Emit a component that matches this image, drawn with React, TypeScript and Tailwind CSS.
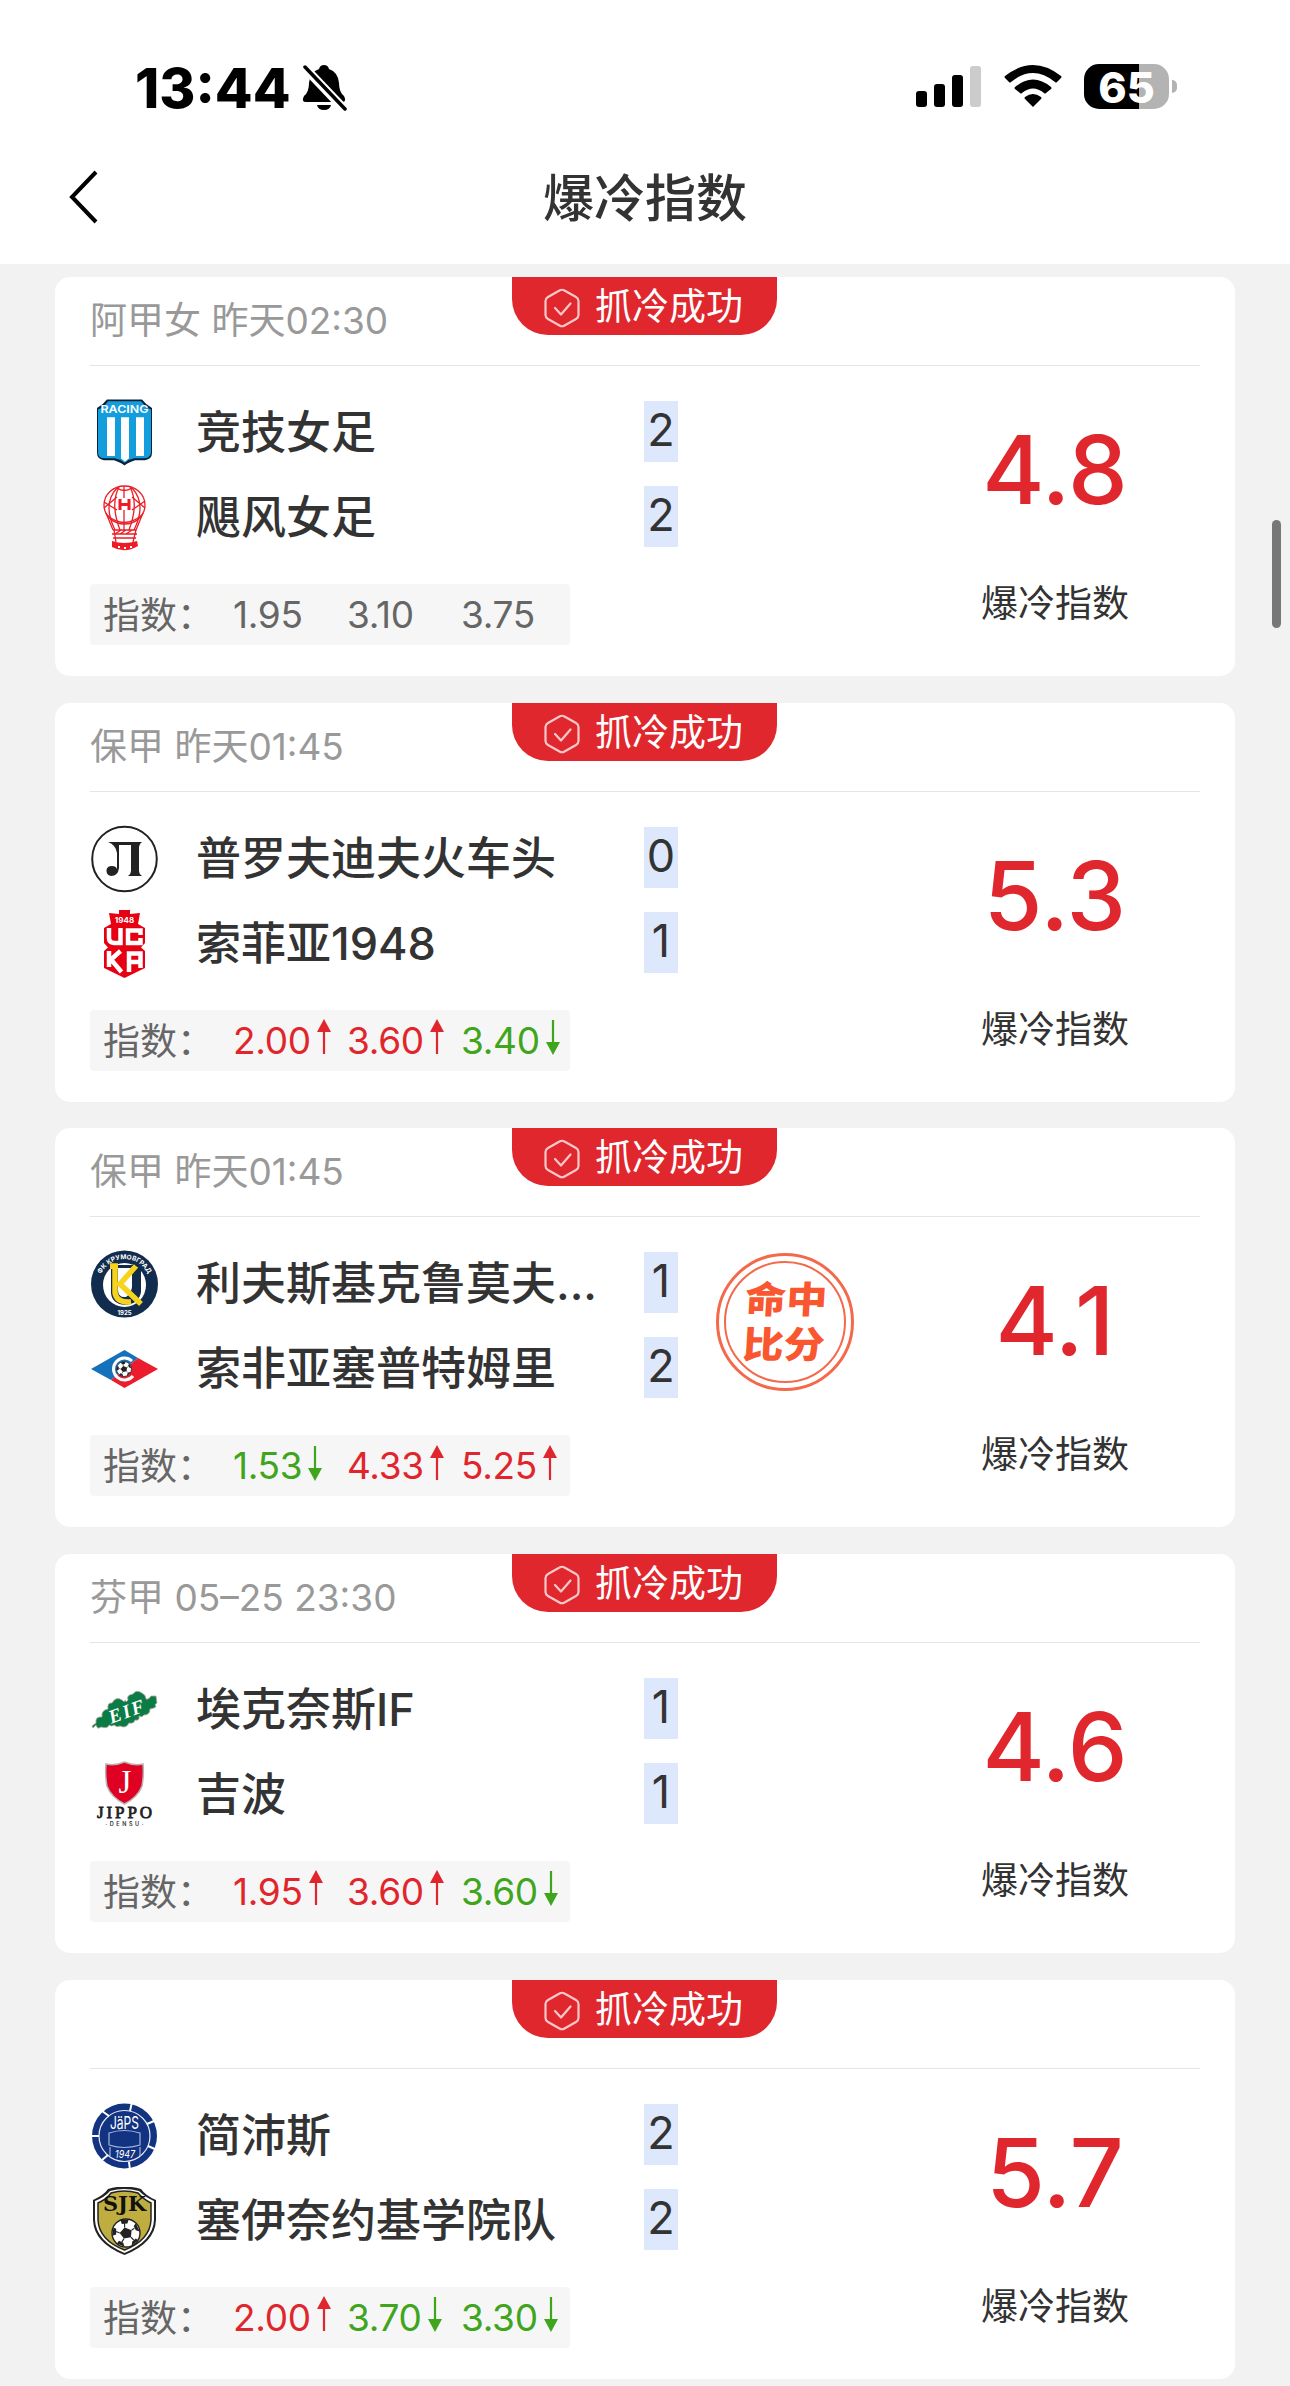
import type { ReactNode } from "react";

type Trend = "up" | "down" | "none";

interface Team {
 name: string;
 score: number;
 logo: ReactNode;
}

interface Odd {
 value: string;
 trend: Trend;
}

interface Match {
 id: number;
 title: string;
 home: Team;
 away: Team;
 odds: Odd[];
 index: string;
 hitScore?: boolean;
}

interface LogoProps {
 children: ReactNode;
}

function Logo({ children }: LogoProps) {
 return (
  <svg viewBox="0 0 68 68" className="size-[68px] shrink-0">
   {children}
  </svg>
 );
}

function Ball({ cx, cy, r }: { cx: number; cy: number; r: number }) {
 return (
  <g transform={`translate(${cx} ${cy}) scale(${r / 10})`}>
   <circle r="10" fill="#fff" stroke="#222" strokeWidth="1" />
   <path d="M-1-4 4-2 3.500 3-1.500 4-4.500 0Z" fill="#222" />
   <path d="M-4-9.200 2-9.800 1-6.800-3-6.500ZM7-7 9.800-1 7-2 5.500-5ZM8.500 5 4 9.200 4.500 6 7 4ZM-1 9.900-6.500 7.500-5 5.500-2 7ZM-9.800 2-9-4-7-3-7 1Z" fill="#222" />
   <path d="M-1-4-1-7M4-2 6-3.500M3.500 3 5.500 5M-1.500 4-3 6.500M-4.500 0-7-1" stroke="#222" strokeWidth=".8" />
  </g>
 );
}

function RacingLogo() {
 return (
  <Logo>
   <g transform="translate(0 .5) scale(1 1.110)">
    <path d="M17 0H52Q56 5 62 8V50Q62 56 55 57H45Q38 59 34.500 62Q31 59 24 57H14Q7 56 7 50V8Q13 5 17 0Z" transform="scale(1 .96)" fill="#0a2238" />
    <path d="M18 1.500H51Q56 7 61 9V48Q60 53 54 53H44Q38 54 34.500 57Q31 54 25 53H15Q8 53 8 48V9Q14 7 18 1.500Z" fill="#149ddd" />
    <path d="M17 16H25V51H17ZM31 16H39V53L35 56 31 53ZM46 16H54V51H46Z" fill="#fff" />
   </g>
   <text x="34.500" y="13.500" textAnchor="middle" fontSize="11" fontWeight="600" fill="#fff" fontFamily="Inter, sans-serif" textLength="48" lengthAdjust="spacingAndGlyphs">
    RACING
   </text>
  </Logo>
 );
}

function HuracanLogo() {
 return (
  <Logo>
   <g fill="none" stroke="#ed1c24" strokeWidth="1.300">
    <ellipse cx="34.500" cy="21" rx="20.500" ry="19" />
    <path d="M27 4Q34 9 42 4M34 2V14M34 26V46M27 4Q12 20 25 46M42 4Q57 20 44 46M29 3Q20 20 30 46M40 3Q49 20 39 46" />
    <path d="M14 18 27 26M14 24 27 13M42 13 55 24M42 26 55 17" />
    <path d="M17 31Q34 46 52 31M16 29 23 46M53 29 46 46M23 46H46M22 50H47M23 54H46M24 46 26 58M46 46 43 58M25 50 31 46M30 50 36 46M36 50 42 46" />
   </g>
   <path d="M22 57Q34 61 47 57L48 62Q35 70 22 63Z" fill="#ed1c24" />
   <path d="M30 15V26M39 15V26M30 20.500H39" stroke="#ed1c24" strokeWidth="3" />
   <path d="M28 63H30M34 64H36M40 63H42" stroke="#fff" strokeWidth="2" />
  </Logo>
 );
}

function LokomotivLogo() {
 return (
  <Logo>
   <circle cx="34.500" cy="34" r="32.300" fill="#fff" stroke="#222" strokeWidth="2" />
   <path d="M18 17H52Q49 19 49 22V46Q49 49 52 51H38Q41 49 41 46V20H29V43Q28 51 21 51Q16 50 16.500 45Q17 41 22 41Q26 41 27 44V28Q26 20 18 17Z" fill="#222" />
  </Logo>
 );
}

function CskaLogo() {
 return (
  <Logo>
   <path d="M29 0H40V4L50 3 48 14 55 18V33L51 37.500 55 41V58L34.500 68 14 58V41L18 37.500 14 33V18L21 14 19 3 29 4Z" fill="#e60012" />
   <g fill="none" stroke="#fff" strokeWidth="4.500">
    <path d="M19 18V28Q19 32.500 24 33H30.500V18M50.500 25V20.500H38V33H50.500V28" />
    <path d="M19 41V57M30.500 41 21 49.500 31.500 62M39 62V43.500H50.500V58M39 52H50" />
   </g>
   <text x="34.500" y="13" textAnchor="middle" fontSize="8" fontWeight="700" fill="#fff" fontFamily="Inter, sans-serif">
    1948
   </text>
  </Logo>
 );
}

function KrumovgradLogo() {
 return (
  <Logo>
   <circle cx="34.500" cy="34" r="33.500" fill="#112c4d" />
   <path id="krumTop" d="M8.500 35A26 26 0 0 1 60.500 35" fill="none" />
   <ellipse cx="34.500" cy="35" rx="21.500" ry="22" fill="#fff" />
   <path d="M23 15H47V18H51V42Q49 54 35 55Q22 54 21 43V19H23Z" fill="#112c4d" />
   <path d="M28 18H42V37Q41 44 36 47Q28 48 28 40Z" fill="#fff" />
   <path d="M20 16H28M25 15V43Q27 53 41 52M46 16 30 34 51 54" fill="none" stroke="#f8d31c" strokeWidth="5.500" />
   <text fontSize="6.500" fontWeight="700" fill="#fff" fontFamily="Inter, sans-serif">
    <textPath href="#krumTop" startOffset="50%" textAnchor="middle">
     ФК КРУМОВГРАД
    </textPath>
   </text>
   <text x="34.500" y="64.500" textAnchor="middle" fontSize="6" fontWeight="700" fill="#fff" fontFamily="Inter, sans-serif">
    1925
   </text>
  </Logo>
 );
}

function SeptemvriLogo() {
 return (
  <Logo>
   <path d="M1 34 34.500 15 48 23 21 45Z" fill="#1671bb" />
   <path d="M68 34 34.500 53 21 45 48 23Z" fill="#eb1c2d" />
   <path d="M42 26A11 11 0 1 0 43 41" fill="none" stroke="#fff" strokeWidth="3" />
   <Ball cx={34} cy={34} r={7.5} />
  </Logo>
 );
}

function EifLogo() {
 return (
  <Logo>
   <path
    d="M2 50 6 47Q5 40 12 41Q11 34 18 33Q17 26 22 27Q26 20 32 24Q35 27 35 24Q36 27 38 24Q36 19 43 18Q46 13 52 17Q56 19 56 23Q59 24 61 20L66 20 67 27Q64 28 66 31Q62 33 60 33Q60 39 54 39Q52 42 49 40Q50 45 45 44Q44 48 39 47Q36 53 30 50Q27 52 24 49Q22 51 19 49Q18 53 11 51Q7 54 6 49L3 52Z"
    fill="#0b7c46"
    stroke="#b7aaa0"
    strokeWidth=".8"
   />
   <text transform="rotate(-20 36 36)" x="18" y="42" fontSize="19" fontWeight="700" fontStyle="italic" fill="#fff" fontFamily="'Liberation Serif', serif" letterSpacing="2">
    EIF
   </text>
  </Logo>
 );
}

function JippoLogo() {
 return (
  <Logo>
   <path d="M16 3Q25 5 34.500 1Q44 5 53 3Q54 14 52 25Q48 36 34.500 43Q21 36 17 25Q15 14 16 3Z" fill="#df0024" stroke="#b9b2b2" strokeWidth="1.500" />
   <text x="35" y="32" textAnchor="middle" fontSize="33" fill="#fff" fontFamily="'Liberation Serif', serif">
    J
   </text>
   <text x="34.500" y="57" textAnchor="middle" fontSize="17" fill="#222" stroke="#222" strokeWidth=".8" fontFamily="'Liberation Serif', serif" textLength="55">
    JIPPO
   </text>
   <text x="34.500" y="64.500" textAnchor="middle" fontSize="5.500" fontWeight="600" fill="#333" fontFamily="Inter, sans-serif" textLength="38">
    ·DENSU·
   </text>
  </Logo>
 );
}

function JapsLogo() {
 return (
  <Logo>
   <circle cx="34.500" cy="34" r="32.500" fill="#123282" />
   <circle cx="34.500" cy="34" r="25.500" fill="none" stroke="#e6ebf5" strokeWidth="1.200" />
   <path d="M42 0 40 9M64 19 57 22M67 48 58 44M40 68 39 60M12 58 18 53M0 34H9M12 9 19 14" stroke="#fff" strokeWidth="2" />
   <path d="M19 31Q34 26 50 31V43Q34 48 19 43ZM20 45V54M50 45V54" fill="none" stroke="#a7b6d9" strokeWidth="1.200" />
   <text x="34.500" y="26.500" textAnchor="middle" fontSize="17" fill="#fff" fontFamily="Inter, sans-serif" textLength="29" lengthAdjust="spacingAndGlyphs">
    JäPS
   </text>
   <text x="35" y="56" textAnchor="middle" fontSize="11" fontStyle="italic" fill="#fff" fontFamily="Inter, sans-serif" textLength="20" lengthAdjust="spacingAndGlyphs">
    1947
   </text>
  </Logo>
 );
}

function SjkLogo() {
 return (
  <Logo>
   <path d="M3 13Q14 8 18 2Q34-3 51 2Q56 9 66 13V33Q65 56 34.500 68Q4 56 3 33Z" fill="#222" />
   <path d="M5 14Q15 10 20 4Q34 0 49 4Q55 10 64 14V33Q63 54 34.500 66Q6 54 5 33Z" fill="#fff" />
   <path d="M8 16Q17 12 21 6Q34 2 48 6Q53 12 61 16V33Q60 53 34.500 63Q9 53 8 33Z" fill="#bfae3f" stroke="#222" strokeWidth="1.500" />
   <text x="34.500" y="24" textAnchor="middle" fontSize="20" fontWeight="700" fill="#111" fontFamily="'DejaVu Serif', serif" textLength="43" lengthAdjust="spacingAndGlyphs">
    SJK
   </text>
   <Ball cx={36} cy={46} r={14} />
  </Logo>
 );
}

const matches: Match[] = [
 {
  id: 1,
  title: "阿甲女 昨天02:30",
  home: { name: "竞技女足", score: 2, logo: <RacingLogo /> },
  away: { name: "飓风女足", score: 2, logo: <HuracanLogo /> },
  odds: [
   { value: "1.95", trend: "none" },
   { value: "3.10", trend: "none" },
   { value: "3.75", trend: "none" },
  ],
  index: "4.8",
 },
 {
  id: 2,
  title: "保甲 昨天01:45",
  home: { name: "普罗夫迪夫火车头", score: 0, logo: <LokomotivLogo /> },
  away: { name: "索菲亚1948", score: 1, logo: <CskaLogo /> },
  odds: [
   { value: "2.00", trend: "up" },
   { value: "3.60", trend: "up" },
   { value: "3.40", trend: "down" },
  ],
  index: "5.3",
 },
 {
  id: 3,
  title: "保甲 昨天01:45",
  home: { name: "利夫斯基克鲁莫夫...", score: 1, logo: <KrumovgradLogo /> },
  away: { name: "索非亚塞普特姆里", score: 2, logo: <SeptemvriLogo /> },
  odds: [
   { value: "1.53", trend: "down" },
   { value: "4.33", trend: "up" },
   { value: "5.25", trend: "up" },
  ],
  index: "4.1",
  hitScore: true,
 },
 {
  id: 4,
  title: "芬甲 05–25 23:30",
  home: { name: "埃克奈斯IF", score: 1, logo: <EifLogo /> },
  away: { name: "吉波", score: 1, logo: <JippoLogo /> },
  odds: [
   { value: "1.95", trend: "up" },
   { value: "3.60", trend: "up" },
   { value: "3.60", trend: "down" },
  ],
  index: "4.6",
 },
 {
  id: 5,
  title: "",
  home: { name: "简沛斯", score: 2, logo: <JapsLogo /> },
  away: { name: "塞伊奈约基学院队", score: 2, logo: <SjkLogo /> },
  odds: [
   { value: "2.00", trend: "up" },
   { value: "3.70", trend: "down" },
   { value: "3.30", trend: "down" },
  ],
  index: "5.7",
 },
];

const trendColor: Record<Trend, string> = {
 up: "text-[#e0262c]",
 down: "text-[#3fa51c]",
 none: "text-[#666]",
};

function TrendArrow({ trend }: { trend: Trend }) {
 if (trend === "none") return null;
 return (
  <svg viewBox="0 0 14 36" className={trend === "up" ? "w-[14px] h-9 -mt-[6px]" : "w-[14px] h-9 -mt-[6px] rotate-180"}>
   <path d="M7 0 14 13H0Z" fill="currentColor" />
   <path d="M7 10V35" stroke="currentColor" strokeWidth="2.200" />
  </svg>
 );
}

function TeamRow({ team }: { team: Team }) {
 return (
  <div className="flex h-[68px]">
   {team.logo}
   <div className="ml-[38px] w-[448px] text-[45px] leading-[68px] font-medium text-[#333] whitespace-nowrap">{team.name}</div>
   <div className="mt-[2px] w-[34px] h-[61px] bg-[#dde8fd] text-center text-[45px] leading-[58px] text-[#333]">{team.score}</div>
  </div>
 );
}

function SuccessBadge() {
 return (
  <div className="absolute top-0 left-[457px] flex w-[265px] h-[58px] items-center rounded-b-[36px] bg-[#e0272d] pl-[32px] text-white">
   <svg viewBox="0 0 36 40" className="w-9 h-10 mt-[4px]" fill="none" stroke="#f9c9ca" strokeWidth="2.200" strokeLinejoin="round" strokeLinecap="round">
    <path d="M15.500 2.500Q18 1 20.500 2.500L32 9Q34.500 10.500 34.500 13V27Q34.500 29.500 32 31L20.500 37.500Q18 39 15.500 37.500L4 31Q1.500 29.500 1.500 27V13Q1.500 10.500 4 9Z" />
    <path d="M11 20 17 26.500 26.500 15.500" />
   </svg>
   <span className="ml-[15px] text-[37px] leading-[56px] pt-[2px]">抓冷成功</span>
  </div>
 );
}

function HitStamp() {
 return (
  <div className="ml-[38px] mt-[36px] flex size-[138px] shrink-0 items-center justify-center rounded-full border-[3px] border-[#f4694a] p-[5px]">
   <div className="flex size-full flex-col items-center justify-center rounded-full border-2 border-[#f4694a]">
    <div className="-skew-x-3 scale-y-90 text-[41px] leading-[50px] font-black text-[#f9572f]">
     <div>命中</div>
     <div>比分</div>
    </div>
   </div>
  </div>
 );
}

function MatchCard({ match }: { match: Match }) {
 return (
  <div className="relative h-[399px] shrink-0 rounded-[15px] bg-white px-[35px]">
   <SuccessBadge />
   <div className="h-[89px] border-b-[1.500px] border-[#e5e5e5] text-[37px] leading-[88px] text-[#999]">{match.title}</div>
   <div className="flex">
    <div className="w-[588px] pt-[33px]">
     <div className="flex flex-col gap-[17px]">
      <TeamRow team={match.home} />
      <TeamRow team={match.away} />
     </div>
     <div className="mt-[32px] flex w-[480px] h-[61px] rounded-[4px] bg-[#f6f6f6] pl-[13px] text-[37px] leading-[63px]">
      <span className="w-[130px] shrink-0 text-[#666]">指数：</span>
      {match.odds.map((odd, i) => (
       <div key={i} className={`flex w-[114px] shrink-0 items-center gap-[6px] tracking-[-0.3px] ${trendColor[odd.trend]}`}>
        <span>{odd.value}</span>
        <TrendArrow trend={odd.trend} />
       </div>
      ))}
     </div>
    </div>
    {match.hitScore && <HitStamp />}
    <div className="ml-auto w-[290px] pt-[53px] text-center">
     <div className="text-[95px] leading-[102px] font-medium text-[#e0272d]">{match.index}</div>
     <div className="mt-[57px] text-[37px] leading-[52px] text-[#333]">爆冷指数</div>
    </div>
   </div>
  </div>
 );
}

function StatusBar() {
 return (
  <div className="flex h-[132px] pt-[64px] pl-[135px] pr-[113px] text-black">
   <span className="text-[55px] leading-[49px] font-extrabold">13:44</span>
   <svg viewBox="0 0 46 48" className="ml-[10px] w-[46px] h-12">
    <path d="M23 1Q27 1 28 5Q37 8 38 19Q38 28 43 32Q46 38 41 38H5Q0 38 3 32Q8 28 8 19Q9 8 18 5Q19 1 23 1ZM16 41H30Q29 46 23 46Q17 46 16 41Z" />
    <path d="M3 3 44 46" stroke="#fff" strokeWidth="9" />
    <path d="M4 3 44 45" stroke="#000" strokeWidth="3.500" strokeLinecap="round" />
   </svg>
   <div className="ml-auto flex">
    <svg viewBox="0 0 66 42" className="mt-[1px] w-[66px] h-[42px]">
     <rect x="0" y="26" width="11" height="16" rx="3" />
     <rect x="18" y="19" width="11" height="23" rx="3" />
     <rect x="36" y="10" width="11" height="32" rx="3" />
     <rect x="54" y="1" width="11" height="41" rx="3" fill="#ccc" />
    </svg>
    <svg viewBox="0 0 58 42" className="ml-[22px] mt-[1px] w-[58px] h-[42px]">
     <path d="M1 11Q29-11 57 11Q58 12 57 13L53 17Q52 18 51 17Q29-1 7 17Q6 18 5 17L1 13Q0 12 1 11ZM11 22Q29 7 47 22Q48 23 47 24L42 28Q41 29 40 28Q29 19 18 28Q17 29 16 28L11 24Q10 23 11 22ZM21 32Q29 26 37 32Q38 33 37 34L29 42 21 34Q20 33 21 32Z" />
    </svg>
    <div className="ml-[22px] h-[45px] w-[85px] rounded-[15px] bg-linear-to-r from-black from-[55px] to-[#b3b3b3] to-[55px] text-center text-[43px] leading-[46px] font-extrabold text-white">
     65
    </div>
    <div className="ml-[3px] mt-[16px] w-[5px] h-[13px] rounded-r-full bg-[#b3b3b3]" />
   </div>
  </div>
 );
}

export default function App() {
 return (
  <div className="relative flex h-[2386px] w-[1290px] flex-col overflow-hidden bg-[#f2f2f2] font-[Inter,'Noto_Sans_CJK_SC',sans-serif]">
   <div className="h-[264px] shrink-0 bg-white">
    <StatusBar />
    <div className="flex h-[130px] items-center pl-[68px]">
     <svg viewBox="0 0 30 56" className="w-[30px] h-14" fill="none" stroke="#000" strokeWidth="4">
      <path d="M28 3 4 28 28 53" />
     </svg>
     <h1 className="mr-[98px] flex-1 pt-[4px] text-center text-[51px] leading-[60px] font-medium text-[#333]">爆冷指数</h1>
    </div>
   </div>
   <div className="mt-[13px] flex flex-col gap-[26.660px] px-[55px]">
    {matches.map((match) => (
     <MatchCard key={match.id} match={match} />
    ))}
   </div>
   <div className="absolute top-[520px] right-[9px] w-[9px] h-[108px] rounded-full bg-[#777]" />
  </div>
 );
}
